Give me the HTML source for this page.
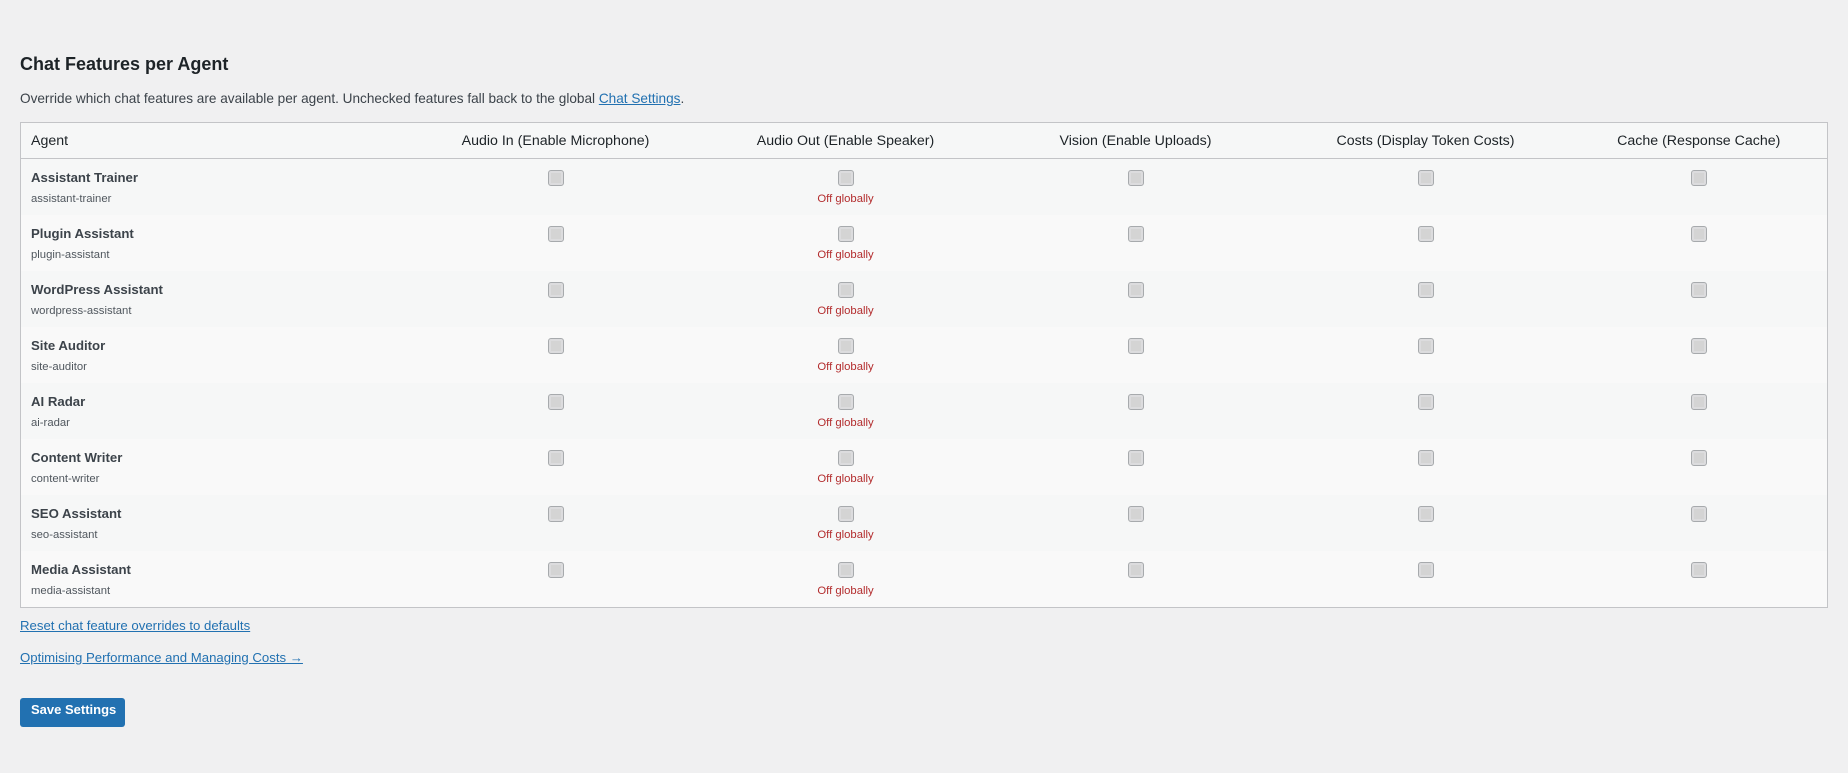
<!DOCTYPE html>
<html><head><meta charset="utf-8"><style>
body{margin:0;background:#f0f0f1;font-family:"Liberation Sans",sans-serif;color:#1d2327;width:1848px;height:773px;overflow:hidden;position:relative}
h2{position:absolute;left:20px;top:54px;margin:0;font-size:18px;font-weight:bold;color:#1d2327}
.desc{position:absolute;left:20px;top:91px;font-size:13.6px;color:#3c434a}
a{color:#2271b1;text-decoration:underline}
table{position:absolute;left:20px;top:122px;width:1808px;border:1px solid #c3c4c7;border-collapse:collapse;background:#f6f7f7;table-layout:fixed}
th{font-weight:normal;font-size:14.2px;height:35px;text-align:center;border-bottom:1px solid #c3c4c7;color:#1d2327;padding:0}
th.a{text-align:left;padding-left:10px}
td{height:56px;vertical-align:top;text-align:center;padding:0}
tr:nth-child(odd) td{background:#f9f9f9}
td.a{text-align:left;padding-left:10px}
.n{font-weight:bold;font-size:13.2px;color:#3c434a;margin-top:11px;line-height:16px}
.s{font-size:11.3px;color:#50575e;margin-top:6px;line-height:14px}
.cb{display:inline-block;width:14px;height:14px;border:1px solid #a7aaad;border-radius:3px;background:#d4d4d4;margin-top:11px;box-shadow:inset 0 0 0 2px #dcdcde;vertical-align:top}
.off{font-size:11.3px;color:#b32d2e;margin-top:6px;line-height:14px}
.l{position:absolute;left:20px;font-size:13.2px}
.btn{position:absolute;left:20px;top:698px;width:105px;height:29px;background:#2271b1;border-radius:3px;color:#fff;font-size:13px;font-weight:bold;box-sizing:border-box;padding:4px 0 0 11px}
</style></head><body>
<h2>Chat Features per Agent</h2>
<div class="desc">Override which chat features are available per agent. Unchecked features fall back to the global <a>Chat Settings</a>.</div>
<table>
<colgroup><col style="width:390px"><col style="width:290px"><col style="width:290px"><col style="width:290px"><col style="width:290px"><col></colgroup>
<tr><th class="a">Agent</th><th>Audio In (Enable Microphone)</th><th>Audio Out (Enable Speaker)</th><th>Vision (Enable Uploads)</th><th>Costs (Display Token Costs)</th><th>Cache (Response Cache)</th></tr>
<tr><td class="a"><div class="n">Assistant Trainer</div><div class="s">assistant-trainer</div></td><td><span class="cb"></span></td><td><span class="cb"></span><div class="off">Off globally</div></td><td><span class="cb"></span></td><td><span class="cb"></span></td><td><span class="cb"></span></td></tr>
<tr><td class="a"><div class="n">Plugin Assistant</div><div class="s">plugin-assistant</div></td><td><span class="cb"></span></td><td><span class="cb"></span><div class="off">Off globally</div></td><td><span class="cb"></span></td><td><span class="cb"></span></td><td><span class="cb"></span></td></tr>
<tr><td class="a"><div class="n">WordPress Assistant</div><div class="s">wordpress-assistant</div></td><td><span class="cb"></span></td><td><span class="cb"></span><div class="off">Off globally</div></td><td><span class="cb"></span></td><td><span class="cb"></span></td><td><span class="cb"></span></td></tr>
<tr><td class="a"><div class="n">Site Auditor</div><div class="s">site-auditor</div></td><td><span class="cb"></span></td><td><span class="cb"></span><div class="off">Off globally</div></td><td><span class="cb"></span></td><td><span class="cb"></span></td><td><span class="cb"></span></td></tr>
<tr><td class="a"><div class="n">AI Radar</div><div class="s">ai-radar</div></td><td><span class="cb"></span></td><td><span class="cb"></span><div class="off">Off globally</div></td><td><span class="cb"></span></td><td><span class="cb"></span></td><td><span class="cb"></span></td></tr>
<tr><td class="a"><div class="n">Content Writer</div><div class="s">content-writer</div></td><td><span class="cb"></span></td><td><span class="cb"></span><div class="off">Off globally</div></td><td><span class="cb"></span></td><td><span class="cb"></span></td><td><span class="cb"></span></td></tr>
<tr><td class="a"><div class="n">SEO Assistant</div><div class="s">seo-assistant</div></td><td><span class="cb"></span></td><td><span class="cb"></span><div class="off">Off globally</div></td><td><span class="cb"></span></td><td><span class="cb"></span></td><td><span class="cb"></span></td></tr>
<tr><td class="a"><div class="n">Media Assistant</div><div class="s">media-assistant</div></td><td><span class="cb"></span></td><td><span class="cb"></span><div class="off">Off globally</div></td><td><span class="cb"></span></td><td><span class="cb"></span></td><td><span class="cb"></span></td></tr>
</table>
<a class="l" style="top:618px">Reset chat feature overrides to defaults</a>
<a class="l" style="top:650px">Optimising Performance and Managing Costs →</a>
<div class="btn">Save Settings</div>
</body></html>
